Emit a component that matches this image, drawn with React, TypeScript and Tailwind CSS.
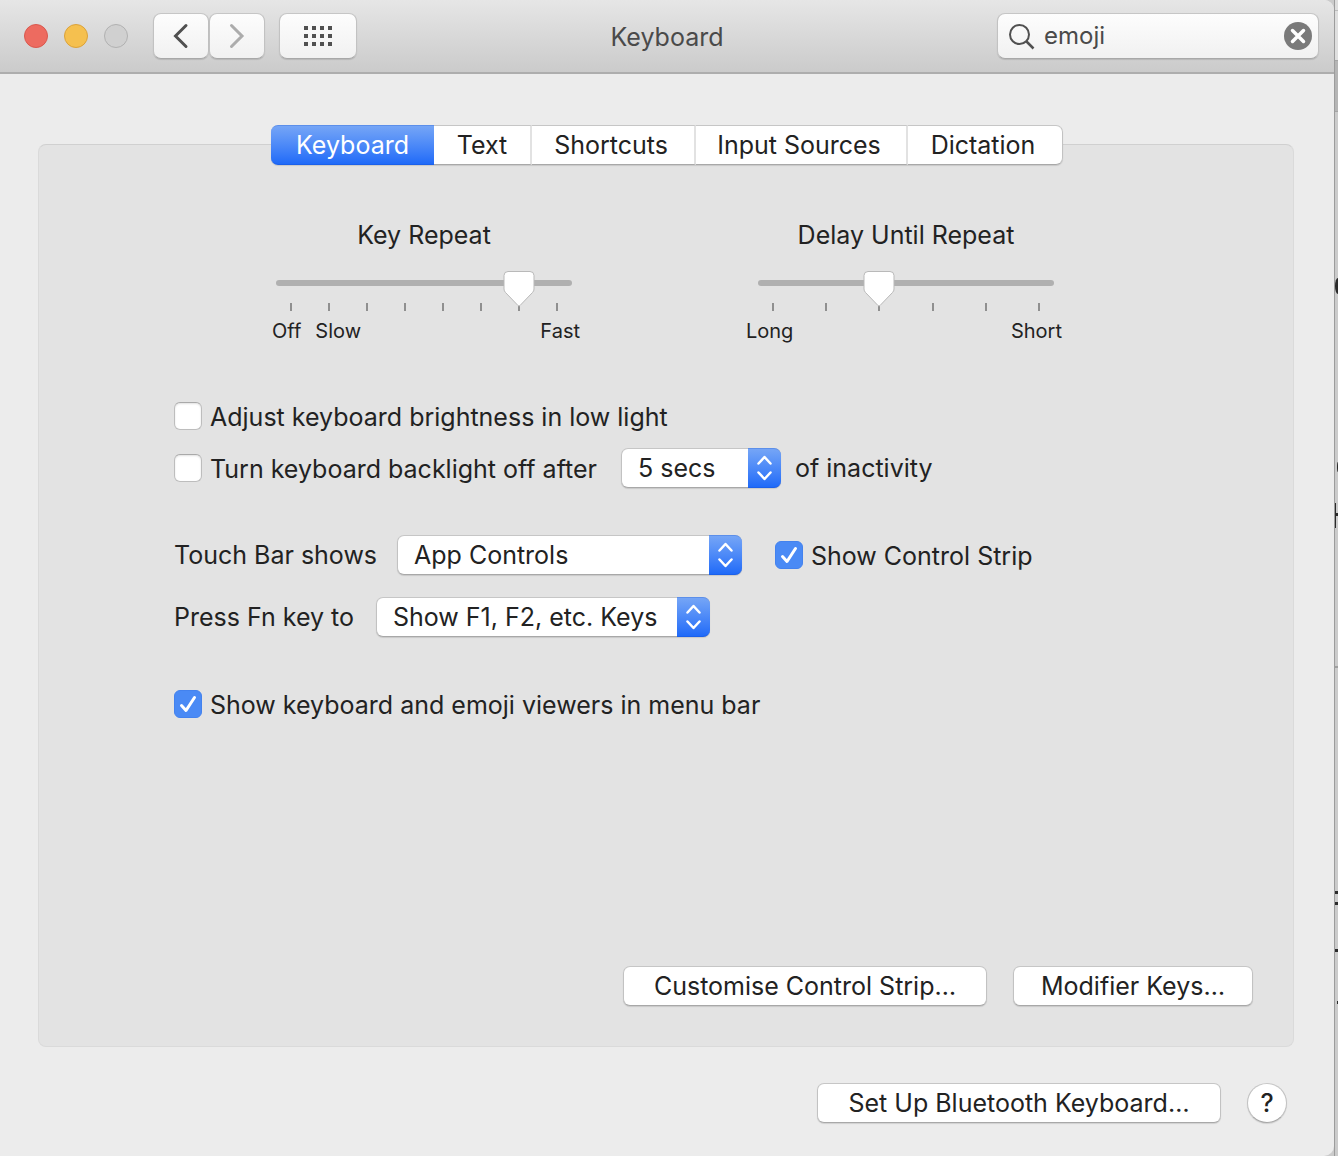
import { useState } from "react";
import type { ReactNode } from "react";
import clsx from "clsx";

const tabs = [
  { name: "Keyboard", width: "w-[163px]" },
  { name: "Text", width: "w-[98px]" },
  { name: "Shortcuts", width: "w-[164px]" },
  { name: "Input Sources", width: "w-[212px]" },
  { name: "Dictation", width: "w-[155px]" },
];

const raised =
  "border border-t-[#c6c6c6] border-x-[#c2c2c2] border-b-[#a8a8a8] shadow-[0_1px_1px_rgba(0,0,0,0.12)]";

function ToolbarButton({ label, className, children }: { label: string; className: string; children: ReactNode }) {
  return (
    <button
      type="button"
      aria-label={label}
      className={clsx(
        "flex h-[46px] items-center justify-center rounded-lg bg-linear-to-b from-[#fdfdfd] to-[#f1f1f1]",
        raised,
        className,
      )}
    >
      {children}
    </button>
  );
}

function PushButton({ className, children }: { className: string; children: ReactNode }) {
  return (
    <button type="button" className={clsx("h-10 rounded-[7px] bg-white text-center", raised, className)}>
      {children}
    </button>
  );
}

function TitleBar() {
  const [query, setQuery] = useState("emoji");
  return (
    <header className="grid h-[74px] grid-cols-[1fr_auto_1fr] items-center border-b-2 border-[#adadad] bg-linear-to-b from-[#e6e6e6] to-[#cbcbcb] px-[15px]">
      <div className="flex items-center pl-[9px]">
        <div className="flex gap-4">
          <button type="button" aria-label="Close" className="size-6 rounded-full border border-[#d9584e] bg-[#ed6b60]" />
          <button type="button" aria-label="Minimise" className="size-6 rounded-full border border-[#dba23a] bg-[#f5c04f]" />
          <button type="button" aria-label="Zoom" disabled className="size-6 rounded-full border border-[#b1b1b1] bg-[#d0d0d0]" />
        </div>
        <div className="ml-[25px] flex">
          <ToolbarButton label="Back" className="w-14">
            <svg width="16" height="26" viewBox="0 0 16 26" fill="none" stroke="#505050" strokeWidth="3" strokeLinecap="round">
              <path d="M13 2.500 2.500 13 13 23.500" />
            </svg>
          </ToolbarButton>
          <ToolbarButton label="Forward" className="w-14">
            <svg width="16" height="26" viewBox="0 0 16 26" fill="none" stroke="#acacac" strokeWidth="3" strokeLinecap="round">
              <path d="M2.500 2.500 13 13 2.500 23.500" />
            </svg>
          </ToolbarButton>
        </div>
        <ToolbarButton label="Show All" className="ml-3.5 w-[78px]">
          <svg width="28" height="20" viewBox="0 0 28 20" fill="#505050">
            {[0, 8, 16].map((y) =>
              [0, 8, 16, 24].map((x) => <rect key={`${x}-${y}`} x={x} y={y} width="4" height="4" />),
            )}
          </svg>
        </ToolbarButton>
      </div>
      <h1 className="pt-0.5 text-[#4a4a4a]">Keyboard</h1>
      <div
        className={clsx(
          "flex h-[46px] w-[322px] items-center justify-self-end rounded-lg bg-linear-to-b from-[#fdfdfd] to-[#f1f1f1] pr-1.5 pl-[11px]",
          raised,
        )}
      >
        <svg width="26" height="26" viewBox="0 0 26 26" fill="none" stroke="#505050" strokeWidth="2" className="mt-0.5 shrink-0">
          <circle cx="10.500" cy="10.500" r="9.500" />
          <path d="m17.500 17.500 7 7" strokeWidth="2.500" />
        </svg>
        <input
          type="text"
          aria-label="Search"
          value={query}
          onChange={(e) => setQuery(e.target.value)}
          className="ml-[9px] h-8 min-w-0 flex-1 bg-transparent text-[24px] text-[#4a4a4a] outline-none"
        />
        <button type="button" aria-label="Clear search" onClick={() => setQuery("")} className="shrink-0">
          <svg width="28" height="28" viewBox="0 0 28 28">
            <circle cx="14" cy="14" r="14" fill="#7a7a7a" />
            <path d="m8.500 8.500 11 11m0-11-11 11" stroke="#fff" strokeWidth="3.500" strokeLinecap="round" />
          </svg>
        </button>
      </div>
    </header>
  );
}

function TabBar() {
  const [active, setActive] = useState("Keyboard");
  return (
    <div role="tablist" className="mx-auto flex h-10 w-fit rounded-[7px] shadow-[0_1px_1px_rgba(0,0,0,0.12)]">
      {tabs.map((tab, i) => (
        <button
          key={tab.name}
          type="button"
          role="tab"
          aria-selected={active === tab.name}
          onClick={() => setActive(tab.name)}
          className={clsx(
            "border-y",
            tab.width,
            i === 0 && "rounded-l-[7px]",
            i > 1 && "pr-1",
            i > 0 && i < tabs.length - 1 && "border-r-2 border-r-[#e2e2e2]",
            i === tabs.length - 1 && "rounded-r-[7px] border-r border-r-[#c2c2c2]",
            active === tab.name
              ? "border-t-[#5c8fea] border-b-[#1b60ea] bg-linear-to-b from-[#75a5f6] to-[#1f6af8] text-white"
              : "border-t-[#c6c6c6] border-b-[#a8a8a8] bg-white",
          )}
        >
          {tab.name}
        </button>
      ))}
    </div>
  );
}

function TickSlider({
  title,
  steps,
  initial,
  children,
}: {
  title: string;
  steps: number;
  initial: number;
  children: ReactNode;
}) {
  const [value, setValue] = useState(initial);
  const tickX = (i: number) => Math.round(15 + (i * 266) / (steps - 1));
  const x = tickX(value);
  return (
    <div className="w-[296px]">
      <label className="block">
        <span className="block text-center leading-8">{title}</span>
        <span className="relative mt-3.5 block h-12">
          <input
            type="range"
            min={0}
            max={steps - 1}
            value={value}
            onChange={(e) => setValue(Number(e.target.value))}
            className="absolute inset-0 h-full w-full cursor-default opacity-0"
          />
          <svg width="296" height="48" viewBox="0 0 296 48" className="pointer-events-none">
            <rect x="0" y="15" width="296" height="6" rx="3" fill="#b0b0b0" />
            {Array.from({ length: steps }, (_, i) => (
              <rect key={i} x={tickX(i) - 1} y="38" width="2" height="8" fill="#8f8f8f" />
            ))}
            <path
              d={`M${x - 11} 6.500h22a4 4 0 0 1 4 4v13.500q0 2-1.500 3.500L${x + 1} 40.500q-1 1-2 0L${x - 13.5} 27.500q-1.500-1.500-1.500-3.500v-13.500a4 4 0 0 1 4-4z`}
              fill="#fff"
              stroke="#b9b9b9"
            />
          </svg>
        </span>
      </label>
      <div className="mt-1.5 -mr-2 flex text-[20px] leading-6">{children}</div>
    </div>
  );
}

function CheckBox({ label, checked = false, className }: { label: string; checked?: boolean; className?: string }) {
  return (
    <label className={clsx("flex h-10 items-center gap-2", className)}>
      <span className="relative block size-7 shrink-0">
        <input
          type="checkbox"
          defaultChecked={checked}
          className="peer block size-7 appearance-none rounded-md border border-[#bdbdbd] border-t-[#a9a9a9] bg-white shadow-[inset_0_1px_2px_rgba(0,0,0,0.12)] checked:border-[#4382ee] checked:bg-[#4a8af5] checked:shadow-none"
        />
        <svg
          viewBox="0 0 28 28"
          className="pointer-events-none absolute inset-0 hidden size-7 peer-checked:block"
          fill="none"
          stroke="#fff"
          strokeWidth="3"
          strokeLinecap="round"
          strokeLinejoin="round"
        >
          <path d="m7.500 15.500 4.500 5L20.500 7.500" />
        </svg>
      </span>
      <span className="pt-0.5 whitespace-nowrap">{label}</span>
    </label>
  );
}

function PopUp({ id, label, options, className }: { id: string; label?: string; options: string[]; className: string }) {
  return (
    <div className={clsx("relative h-10 shrink-0", className)}>
      <select
        id={id}
        aria-label={label}
        className={clsx("h-10 w-full appearance-none rounded-[7px] bg-white pr-9 pl-4", raised)}
      >
        {options.map((o) => (
          <option key={o}>{o}</option>
        ))}
      </select>
      <span className="pointer-events-none absolute inset-y-0 right-0 flex w-[33px] items-center justify-center rounded-r-[7px] border-y border-t-[#5c8fea] border-b-[#1b60ea] bg-linear-to-b from-[#75a5f6] to-[#1f6af8]">
        <svg width="16" height="26" viewBox="0 0 16 26" fill="none" stroke="#fff" strokeWidth="2.500" strokeLinecap="round" strokeLinejoin="round">
          <path d="m1.500 8.500 6-6.500 6 6.500M1.500 17.500l6 6.500 6-6.500" />
        </svg>
      </span>
    </div>
  );
}

/* sliver of the page that shows behind the window */
function Backdrop() {
  return (
    <div className="relative w-1 shrink-0 overflow-hidden border-l border-[#9c9c9c] bg-[#cbcbcb]">
      <div className="h-[11px] border-b border-[#bcbcbc] bg-[#dedede]" />
      <div className="h-[50px] border-b border-[#a5a5a5] bg-[#dfdfdf]" />
      <div className="h-[51px] border-b border-[#a5a5a5] bg-[#b5b5b5]" />
      <svg width="4" height="1156" className="absolute top-0 -left-px" fill="#2b2b2b" aria-hidden>
        <ellipse cx="4" cy="286" rx="3" ry="8" />
        <rect x="0" y="458" width="1" height="4" />
        <ellipse cx="4" cy="467" rx="1" ry="5" />
        <rect x="0" y="503" width="2" height="25" />
        <rect x="2" y="513" width="2" height="3" />
        <rect x="0" y="666" width="4" height="2" fill="#a0a0a0" />
        <rect x="0" y="891" width="4" height="3" />
        <rect x="0" y="902" width="4" height="3" />
        <rect x="0" y="949" width="4" height="3" />
        <rect x="0" y="1001" width="1" height="2" />
        <rect x="3" y="1001" width="1" height="3" />
        <rect x="0" y="1017" width="1" height="2" />
      </svg>
    </div>
  );
}

export default function App() {
  return (
    <div className="flex min-h-screen bg-[#cbcbcb] font-['Inter','Liberation_Sans',sans-serif] text-[25px] leading-8 text-[#222222]">
      <div className="flex min-w-0 flex-1 flex-col overflow-hidden rounded-r-[10px] bg-[#ececec]">
        <TitleBar />
        <main className="flex flex-1 flex-col px-[38px] pt-[51px] pb-[33px]">
          <div className="z-10">
            <TabBar />
          </div>
          <section className="-mt-[21px] mr-0.5 flex flex-1 flex-col rounded-lg border border-[#dadada] border-t-[#d0d0d0] bg-[#e3e3e3] pt-[74px] pr-10 pb-10 pl-[38px]">
            <div className="flex justify-center gap-[186px]">
              <TickSlider title="Key Repeat" steps={8} initial={6}>
                <span className="-ml-1">Off</span>
                <span className="ml-3.5">Slow</span>
                <span className="ml-auto">Fast</span>
              </TickSlider>
              <TickSlider title="Delay Until Repeat" steps={6} initial={2}>
                <span className="-ml-3">Long</span>
                <span className="ml-auto">Short</span>
              </TickSlider>
            </div>

            <div className="mt-[53px] pl-[97px]">
              <CheckBox label="Adjust keyboard brightness in low light" />
              <div className="mt-3 flex items-center">
                <CheckBox label="Turn keyboard backlight off after" className="w-[447px]" />
                <PopUp id="timeout" label="Backlight timeout" options={["5 secs", "10 secs", "30 secs", "1 min", "5 mins"]} className="w-40" />
                <span className="ml-3.5">of inactivity</span>
              </div>
              <div className="mt-[47px] flex items-center">
                <label htmlFor="touch-bar" className="w-[223px]">
                  Touch Bar shows
                </label>
                <PopUp id="touch-bar" options={["App Controls", "Expanded Control Strip", "F1, F2, etc. Keys"]} className="w-[345px]" />
                <CheckBox label="Show Control Strip" checked className="ml-[33px]" />
              </div>
              <div className="mt-[22px] flex items-center">
                <label htmlFor="fn-key" className="w-[202px]">
                  Press Fn key to
                </label>
                <PopUp id="fn-key" options={["Show F1, F2, etc. Keys", "Expand Control Strip"]} className="w-[334px]" />
              </div>
              <CheckBox label="Show keyboard and emoji viewers in menu bar" checked className="mt-[47px]" />
            </div>

            <div className="mt-auto flex justify-end gap-[26px]">
              <PushButton className="w-[364px]">Customise Control Strip…</PushButton>
              <PushButton className="w-60">Modifier Keys…</PushButton>
            </div>
          </section>
          <footer className="mt-9 mr-[9px] flex justify-end gap-[26px]">
            <PushButton className="w-[404px]">Set Up Bluetooth Keyboard…</PushButton>
            <button type="button" aria-label="Help" className={clsx("size-10 rounded-full bg-white text-center font-medium", raised)}>
              ?
            </button>
          </footer>
        </main>
      </div>
      <Backdrop />
    </div>
  );
}
